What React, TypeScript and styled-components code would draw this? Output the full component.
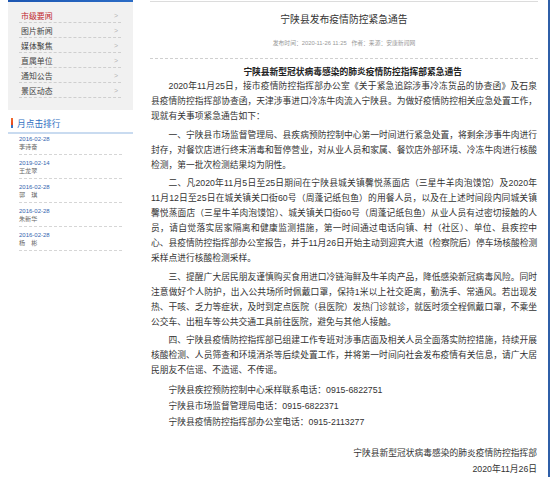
import React from 'react';
import styled, { createGlobalStyle } from 'styled-components';

const GlobalStyle = createGlobalStyle`
  html, body {
    margin: 0;
    padding: 0;
    background: #fff;
  }
  body {
    font-family: 'Liberation Sans', 'Noto Sans CJK SC', sans-serif;
    color: #333;
  }
`;

const Page = styled.div`
  display: flex;
  align-items: flex-start;
  box-sizing: border-box;
  width: 550px;
  min-height: 100vh;
  padding-left: 8px;
  border-right: 2px solid #2f5fa8;
`;

const Sidebar = styled.aside`
  flex: none;
  width: 125px;
`;

const SideTopBar = styled.div`
  height: 2px;
  background: linear-gradient(90deg, #1d57b2, #2b6cc6);
`;

const NavPanel = styled.ul`
  list-style: none;
  margin: 0;
  padding: 6px 12px 12px 11px;
  background: #f1f1f1;
`;

const NavItem = styled.li<{ $active?: boolean }>`
  display: flex;
  align-items: center;
  justify-content: space-between;
  height: 14px;
  padding: 0 3px 0 2px;
  border-bottom: 1px dashed #cfcfcf;
  font-size: 7.9px;
  color: ${({ $active }) => ($active ? '#c0262c' : '#444')};
`;

const NavChevron = styled.span`
  font-size: 7px;
  color: #b5b5b5;
`;

const RankHeading = styled.h3`
  display: flex;
  align-items: center;
  gap: 4px;
  height: 14px;
  margin: 6px 0 0;
  padding: 0 0 2px 3px;
  border-bottom: 2px solid #c9dbf0;
  font-size: 8.7px;
  font-weight: normal;
  color: #2f6fc2;
`;

const RankMarker = styled.span`
  width: 2px;
  height: 10px;
  background: linear-gradient(180deg, #f26a2c 0%, #e6481f 65%, #3a74c0 66%);
`;

const RankList = styled.ul`
  list-style: none;
  margin: 0;
  padding: 0 11px;
`;

const RankItem = styled.li`
  padding: 4px 0 3px;
  border-bottom: 1px dashed #d6d6d6;

  &:first-child {
    padding-top: 1px;
  }
`;

const RankDate = styled.div`
  height: 8px;
  line-height: 8px;
  font-size: 6px;
  color: #3466b0;
`;

const RankName = styled.div`
  height: 8px;
  line-height: 8px;
  font-size: 6.1px;
  color: #666;
`;

const Main = styled.article`
  flex: none;
  width: 388px;
  margin: 1px 0 0 17px;
  border-top: 1px solid #dcdcdc;
`;

const ArticleHead = styled.header`
  display: flex;
  flex-direction: column;
  align-items: center;
  padding: 11px 0 10px;
  border-bottom: 1px dashed #cfcfcf;
`;

const ArticleTitle = styled.h1`
  margin: 0;
  line-height: 14px;
  font-size: 9.8px;
  font-weight: normal;
  color: #333;
`;

const ArticleMeta = styled.div`
  margin-top: 12px;
  line-height: 9px;
  font-size: 5.8px;
  color: #999;
  white-space: pre;
`;

const ArticleBody = styled.div`
  padding: 0 1px;
  font-size: 8.76px;
  color: #333;
`;

const Subtitle = styled.h2`
  margin: 7px 0 0;
  line-height: 13px;
  font-size: 8.76px;
  font-weight: bold;
  text-align: center;
  text-indent: 2em;
  color: #222;
`;

const Paragraph = styled.p`
  margin: 0 0 3.5px;
  line-height: 15px;
`;

// the reference breaks its lines at fixed places, so each line is kept as its own row
const Line = styled.span<{ $last?: boolean }>`
  display: block;
  white-space: nowrap;
  text-align: ${({ $last }) => ($last ? 'left' : 'justify')};
  text-align-last: ${({ $last }) => ($last ? 'auto' : 'justify')};

  &:first-child {
    padding-left: 2em;
  }
`;

const ContactBlock = styled.div`
  padding-left: 2em;
`;

const ContactLine = styled.div`
  line-height: 16px;
`;

const Signature = styled.div`
  margin-top: 15px;
  text-align: right;
`;

const SignatureLine = styled.div`
  line-height: 16.5px;
`;

const navItems = ['市级要闻', '图片新闻', '媒体聚焦', '直属单位', '通知公告', '景区动态'];

const rankItems = [
  { date: '2016-02-28', name: '李诗奋' },
  { date: '2019-02-14', name: '王龙翠' },
  { date: '2016-02-28', name: '郭　琪' },
  { date: '2016-02-28', name: '朱新华' },
  { date: '2016-02-28', name: '杨　彬' },
];

const paragraphs = [
  [
    '2020年11月25日，接市疫情防控指挥部办公室《关于紧急追踪涉事冷冻货品的协查函》及石泉',
    '县疫情防控指挥部协查函，天津涉事进口冷冻牛肉流入宁陕县。为做好疫情防控相关应急处置工作，',
    '现就有关事项紧急通告如下：',
  ],
  [
    '一、宁陕县市场监督管理局、县疾病预防控制中心第一时间进行紧急处置，将剩余涉事牛肉进行',
    '封存，对餐饮店进行终末消毒和暂停营业，对从业人员和家属、餐饮店外部环境、冷冻牛肉进行核酸',
    '检测，第一批次检测结果均为阴性。',
  ],
  [
    '二、凡2020年11月5日至25日期间在宁陕县城关镇馨悦蒸面店（三星牛羊肉泡馍馆）及2020年',
    '11月12日至25日在城关镇关口街60号（周蓬记纸包鱼）的用餐人员，以及在上述时间段内同城关镇',
    '馨悦蒸面店（三星牛羊肉泡馍馆）、城关镇关口街60号（周蓬记纸包鱼）从业人员有过密切接触的人',
    '员，请自觉落实居家隔离和健康监测措施，第一时间通过电话向镇、村（社区）、单位、县疾控中',
    '心、县疫情防控指挥部办公室报告，并于11月26日开始主动到迎宾大道（检察院后）停车场核酸检测',
    '采样点进行核酸检测采样。',
  ],
  [
    '三、提醒广大居民朋友谨慎购买食用进口冷链海鲜及牛羊肉产品，降低感染新冠病毒风险。同时',
    '注意做好个人防护，出入公共场所时佩戴口罩，保持1米以上社交距离，勤洗手、常通风。若出现发',
    '热、干咳、乏力等症状，及时到定点医院（县医院）发热门诊就诊，就医时须全程佩戴口罩，不乘坐',
    '公交车、出租车等公共交通工具前往医院，避免与其他人接触。',
  ],
  [
    '四、宁陕县疫情防控指挥部已组建工作专班对涉事店面及相关人员全面落实防控措施，持续开展',
    '核酸检测、人员筛查和环境消杀等后续处置工作，并将第一时间向社会发布疫情有关信息，请广大居',
    '民朋友不信谣、不造谣、不传谣。',
  ],
];

const contacts = [
  '宁陕县疾控预防控制中心采样联系电话：0915-6822751',
  '宁陕县市场监督管理局电话：0915-6822371',
  '宁陕县疫情防控指挥部办公室电话：0915-2113277',
];

export default function App() {
  return (
    <>
      <GlobalStyle />
      <Page>
        <Sidebar>
          <SideTopBar />
          <NavPanel>
            {navItems.map((item, i) => (
              <NavItem key={item} $active={i === 0}>
                <span>{item}</span>
                <NavChevron>&gt;</NavChevron>
              </NavItem>
            ))}
          </NavPanel>
          <RankHeading>
            <RankMarker />
            月点击排行
          </RankHeading>
          <RankList>
            {rankItems.map((item, i) => (
              <RankItem key={i}>
                <RankDate>{item.date}</RankDate>
                <RankName>{item.name}</RankName>
              </RankItem>
            ))}
          </RankList>
        </Sidebar>

        <Main>
          <ArticleHead>
            <ArticleTitle>宁陕县发布疫情防控紧急通告</ArticleTitle>
            <ArticleMeta>发布时间：2020-11-26 11:25   作者：来源：安康新闻网</ArticleMeta>
          </ArticleHead>
          <ArticleBody>
            <Subtitle>宁陕县新型冠状病毒感染的肺炎疫情防控指挥部紧急通告</Subtitle>
            {paragraphs.map((lines, i) => (
              <Paragraph key={i}>
                {lines.map((line, j) => (
                  <Line key={j} $last={j === lines.length - 1}>
                    {line}
                  </Line>
                ))}
              </Paragraph>
            ))}
            <ContactBlock>
              {contacts.map((line) => (
                <ContactLine key={line}>{line}</ContactLine>
              ))}
            </ContactBlock>
            <Signature>
              <SignatureLine>宁陕县新型冠状病毒感染的肺炎疫情防控指挥部</SignatureLine>
              <SignatureLine>2020年11月26日</SignatureLine>
            </Signature>
          </ArticleBody>
        </Main>
      </Page>
    </>
  );
}
